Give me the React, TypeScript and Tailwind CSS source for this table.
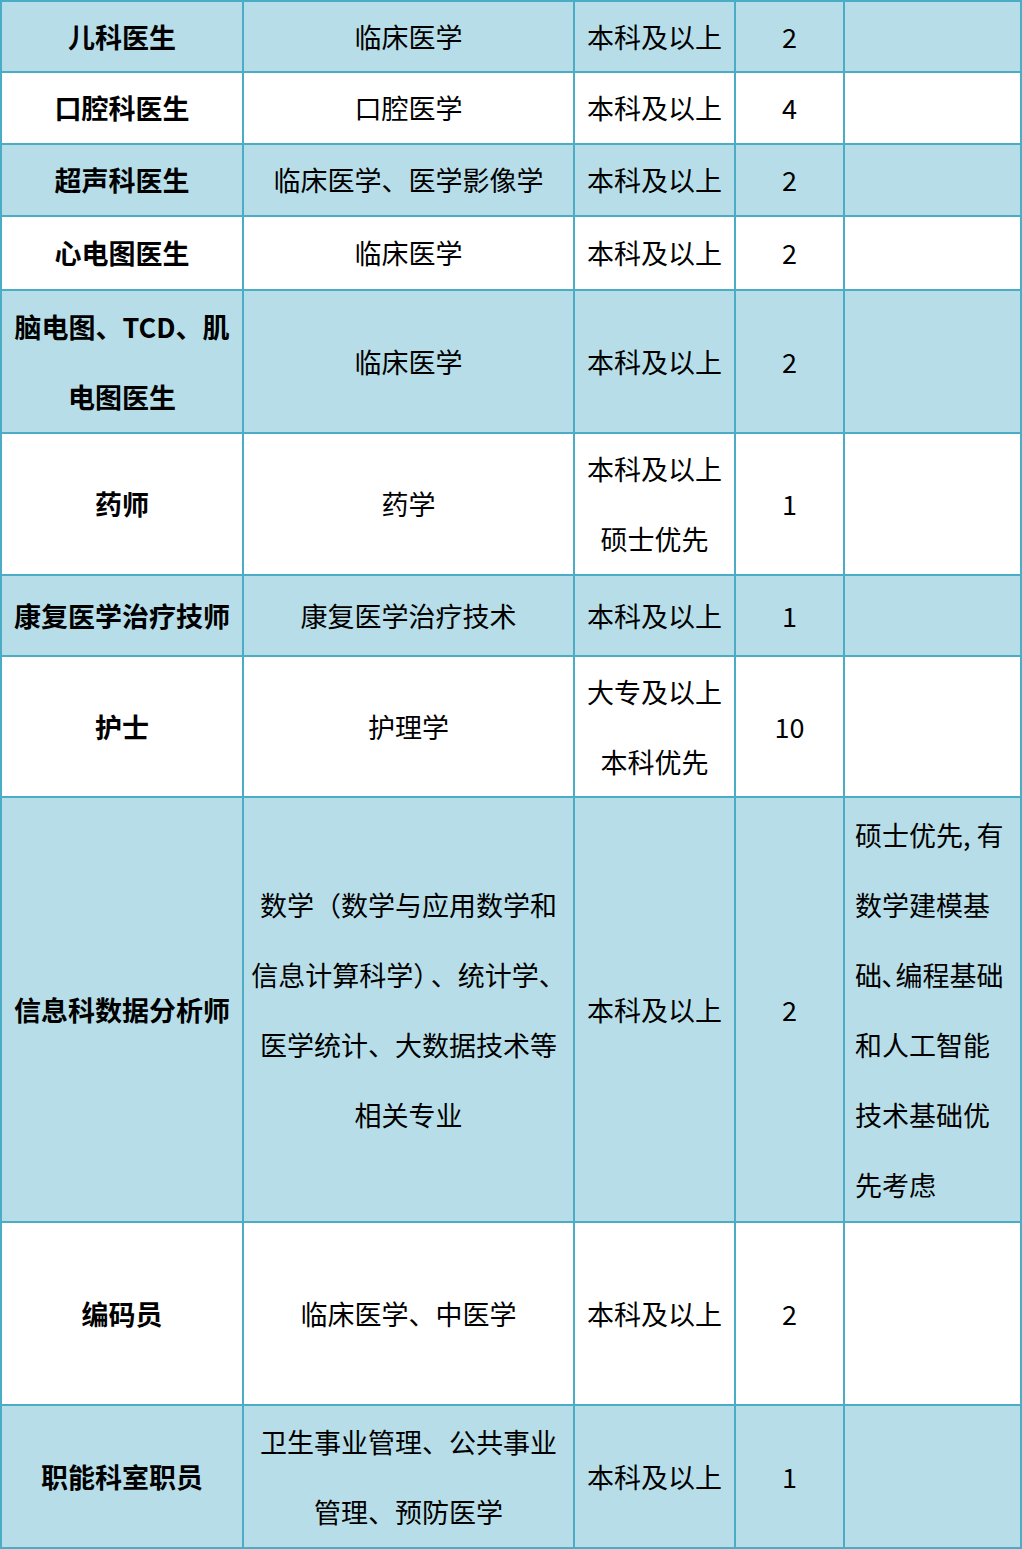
import React from 'react';

type Row = {
  post: React.ReactNode[];
  major: React.ReactNode[];
  edu: React.ReactNode[];
  count: string;
  note?: React.ReactNode[];
};

// 招聘岗位表
const rows: Row[] = [
  { post: ['儿科医生'], major: ['临床医学'], edu: ['本科及以上'], count: '2' },
  { post: ['口腔科医生'], major: ['口腔医学'], edu: ['本科及以上'], count: '4' },
  { post: ['超声科医生'], major: ['临床医学、医学影像学'], edu: ['本科及以上'], count: '2' },
  { post: ['心电图医生'], major: ['临床医学'], edu: ['本科及以上'], count: '2' },
  { post: ['脑电图、TCD、肌', '电图医生'], major: ['临床医学'], edu: ['本科及以上'], count: '2' },
  { post: ['药师'], major: ['药学'], edu: ['本科及以上', '硕士优先'], count: '1' },
  { post: ['康复医学治疗技师'], major: ['康复医学治疗技术'], edu: ['本科及以上'], count: '1' },
  { post: ['护士'], major: ['护理学'], edu: ['大专及以上', '本科优先'], count: '10' },
  {
    post: ['信息科数据分析师'],
    major: [
      '数学（数学与应用数学和',
      <>
        信息计算科学）<span className="ml-[4px]">、</span>统计学、
      </>,
      '医学统计、大数据技术等',
      '相关专业',
    ],
    edu: ['本科及以上'],
    count: '2',
    note: ['硕士优先, 有', '数学建模基', '础､编程基础', '和人工智能', '技术基础优', '先考虑'],
  },
  { post: ['编码员'], major: ['临床医学、中医学'], edu: ['本科及以上'], count: '2' },
  { post: ['职能科室职员'], major: ['卫生事业管理、公共事业', '管理、预防医学'], edu: ['本科及以上'], count: '1' },
];

function Lines({ lines }: { lines: React.ReactNode[] }) {
  return (
    <>
      {lines.map((l, i) => (
        <div key={i} className="whitespace-nowrap">
          {l}
        </div>
      ))}
    </>
  );
}

export default function App() {
  return (
    <div
      className="w-[1022px] bg-white text-black text-[27px] leading-[70px]"
      style={{ fontFamily: '"Noto Sans CJK SC", "Noto Sans", sans-serif' }}
    >
      <div className="grid grid-cols-[240px_329px_159px_107px_175px] grid-rows-[69px_70px_70px_72px_141px_140px_79px_139px_423px_181px_141px] gap-[2px] p-[2px] bg-[#4BACC6]">
        {rows.map((r, i) => {
          const bg = i % 2 === 0 ? 'bg-[#B7DEE8]' : 'bg-white';
          return (
            <React.Fragment key={i}>
              <div className={`${bg} flex flex-col items-center justify-center font-bold`}>
                <Lines lines={r.post} />
              </div>
              <div className={`${bg} flex flex-col items-center justify-center`}>
                <Lines lines={r.major} />
              </div>
              <div className={`${bg} flex flex-col items-center justify-center`}>
                <Lines lines={r.edu} />
              </div>
              <div className={`${bg} flex items-center justify-center`}>{r.count}</div>
              <div className={`${bg} flex flex-col justify-center pl-[10px]`}>
                {r.note && <Lines lines={r.note} />}
              </div>
            </React.Fragment>
          );
        })}
      </div>
    </div>
  );
}
